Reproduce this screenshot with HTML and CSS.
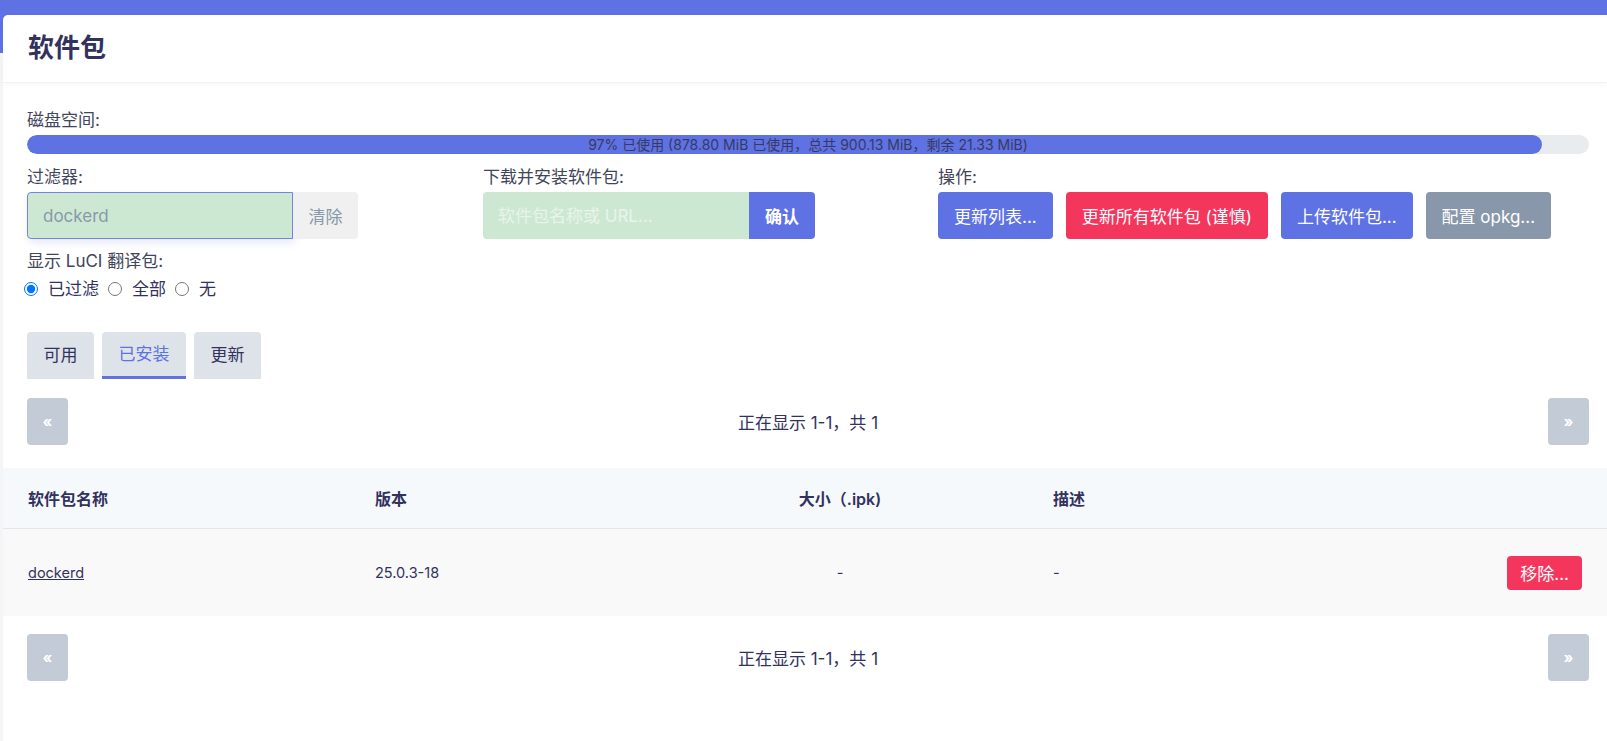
FILE: index.html
```html
<!DOCTYPE html>
<html lang="zh-CN">

<head>
    <meta charset="utf-8">
    <meta name="viewport" content="width=device-width, initial-scale=1.0">
    <title>软件包 - LuCI</title>
    <link rel="stylesheet" href="styles.css">
</head>

<body>
    <div class="main">
        <div class="card">
            <h2 class="card-title">软件包</h2>

            <div class="card-body">
                <div class="field">
                    <label class="field-title">磁盘空间:</label>
                    <div class="disk-bar">
                        <div class="disk-fill" style="width: 97%"></div>
                        <span class="disk-text">97% 已使用 (878.80 MiB 已使用，总共 900.13 MiB，剩余 21.33 MiB)</span>
                    </div>
                </div>

                <div class="controls">
                    <div class="field">
                        <label class="field-title">过滤器:</label>
                        <div class="group">
                            <input class="text filter-input" type="text" value="dockerd">
                            <button class="btn btn-clear">清除</button>
                        </div>
                    </div>
                    <div class="field">
                        <label class="field-title">下载并安装软件包:</label>
                        <div class="group">
                            <input class="text" type="text" placeholder="软件包名称或 URL...">
                            <button class="btn btn-blue btn-ok">确认</button>
                        </div>
                    </div>
                    <div class="field">
                        <label class="field-title">操作:</label>
                        <div class="actions">
                            <button class="btn btn-blue">更新列表...</button>
                            <button class="btn btn-red">更新所有软件包 (谨慎)</button>
                            <button class="btn btn-blue">上传软件包...</button>
                            <button class="btn btn-gray">配置 opkg...</button>
                        </div>
                    </div>
                </div>

                <div class="field i18n">
                    <label class="field-title">显示 LuCI 翻译包:</label>
                    <div class="radios">
                        <label><input type="radio" name="i18n" checked>已过滤</label>
                        <label><input type="radio" name="i18n">全部</label>
                        <label><input type="radio" name="i18n">无</label>
                    </div>
                </div>

                <ul class="tabs">
                    <li>可用</li>
                    <li class="active">已安装</li>
                    <li>更新</li>
                </ul>

                <div class="pager">
                    <button class="btn pager-btn">&laquo;</button>
                    <span>正在显示 1-1，共 1</span>
                    <button class="btn pager-btn">&raquo;</button>
                </div>
            </div>

            <table class="pkg-table">
                <colgroup>
                    <col class="c-name">
                    <col class="c-ver">
                    <col class="c-size">
                    <col>
                    <col class="c-act">
                </colgroup>
                <tr>
                    <th>软件包名称</th>
                    <th>版本</th>
                    <th class="center">大小（.ipk)</th>
                    <th>描述</th>
                    <th></th>
                </tr>
                <tr>
                    <td><a href="#">dockerd</a></td>
                    <td>25.0.3-18</td>
                    <td class="center">-</td>
                    <td>-</td>
                    <td class="right"><button class="btn btn-red btn-remove">移除...</button></td>
                </tr>
            </table>

            <div class="card-body">
                <div class="pager pager-bottom">
                    <button class="btn pager-btn">&laquo;</button>
                    <span>正在显示 1-1，共 1</span>
                    <button class="btn pager-btn">&raquo;</button>
                </div>
            </div>
        </div>
    </div>
</body>

</html>
```

FILE: styles.css
```css
body {
    margin: 0;
    background: linear-gradient(#5e72e4 53px, #f4f5f7 53px);
    font-family: Inter, "Noto Sans CJK SC", sans-serif;
    color: #32325d;
}

.main {
    padding: 15px 0 0 3px;
}

.card {
    background-color: white;
    border-radius: 5px 0 0 0;
    min-height: 726px;
}

.card-title {
    margin: 0;
    padding: 0 25px;
    height: 67px;
    line-height: 66px;
    font-size: 26px;
    font-weight: 700;
    border-bottom: 1px solid #f1f2f4;
    box-shadow: 0 2px 6px rgba(0, 0, 0, 0.03);
}

.card-body {
    padding: 25px 18px 0 24px;
}

.field-title {
    display: block;
    font-size: 17px;
    line-height: 24px;
    margin-bottom: 3px;
    color: #41455a;
}

/* disk usage */

.disk-bar {
    display: grid;
    height: 19px;
    border-radius: 10px;
    background-color: #e9ecef;
    overflow: hidden;
}

.disk-fill,
.disk-text {
    grid-area: 1 / 1;
}

.disk-fill {
    background-color: #5e72e4;
    border-radius: 10px;
}

.disk-text {
    text-align: center;
    font-size: 14px;
    line-height: 19px;
    color: #363a63;
}

/* filter / install / actions */

.controls {
    display: grid;
    grid-template-columns: 456px 455px 1fr;
    margin-top: 11px;
}

.group {
    display: flex;
}

.text {
    box-sizing: border-box;
    width: 266px;
    height: 47px;
    padding: 0 15px;
    border: none;
    border-radius: 4px 0 0 4px;
    background-color: #cde8d2;
    font-family: inherit;
    font-size: 17px;
    color: #8898aa;
    outline: none;
}

.text::placeholder {
    color: #e8f4ea;
}

.filter-input {
    border: 1px solid #7284e8;
    box-shadow: 0 3px 9px rgba(50, 50, 9, 0.04), 3px 4px 8px rgba(94, 114, 228, 0.1);
}

.btn {
    height: 47px;
    padding: 0 16px;
    border: none;
    border-radius: 4px;
    font-family: inherit;
    font-size: 17px;
    color: white;
}

.group .btn {
    border-radius: 0 4px 4px 0;
}

.btn-clear {
    width: 65px;
    padding: 0;
    background-color: #f0f0f0;
    color: #8898aa;
}

.btn-ok {
    width: 66px;
    padding: 0;
    font-weight: 600;
}

.btn-blue {
    background-color: #5e72e4;
}

.btn-red {
    background-color: #f5365c;
}

.btn-gray {
    background-color: #8898aa;
}

.actions {
    display: flex;
    gap: 13px;
}

/* translations */

.i18n {
    margin-top: 10px;
}

.radios {
    display: flex;
    gap: 9px;
    margin: 4px 0 0 -3px;
    font-size: 17px;
    line-height: 24px;
}

.radios label {
    display: flex;
    align-items: center;
}

.radios input {
    width: 14px;
    height: 14px;
    margin: 0 10px 0 0;
}

/* tabs */

.tabs {
    display: flex;
    gap: 8px;
    margin: 31px 0 0;
    padding: 0;
    list-style: none;
}

.tabs li {
    box-sizing: border-box;
    height: 47px;
    line-height: 47px;
    padding: 0 16.5px;
    background-color: #dee3e9;
    border-radius: 4px 4px 0 0;
    font-size: 17px;
}

.tabs .active {
    color: #5e72e4;
    border-bottom: 3px solid #5e72e4;
    line-height: 45px;
}

/* pager */

.pager {
    display: flex;
    justify-content: space-between;
    align-items: center;
    margin-top: 19px;
    font-size: 17px;
}

.pager-btn {
    width: 41px;
    padding: 0;
    background-color: #c3cbd6;
    font-size: 15px;
    font-weight: 700;
}

.pager-bottom {
    margin-top: 0;
}

.card-body:last-child {
    padding-top: 18px;
}

/* package table */

.pkg-table {
    width: 100%;
    margin-top: 23px;
    border-collapse: collapse;
    table-layout: fixed;
}

.c-name {
    width: 347px;
}

.c-ver {
    width: 302px;
}

.c-size {
    width: 376px;
}

.c-act {
    width: 200px;
}

.pkg-table th {
    height: 60px;
    padding: 0 25px;
    text-align: left;
    font-size: 16px;
    font-weight: 600;
    background-color: #f6f9fc;
    border-bottom: 1px solid #e3e6ea;
}

.pkg-table td {
    height: 87px;
    padding: 0 25px;
    font-size: 14.5px;
    background-color: #f9f9f9;
}

.pkg-table .center {
    text-align: center;
}

.pkg-table .right {
    text-align: right;
}

.pkg-table a {
    color: #32325d;
}

.btn-remove {
    height: 34px;
    padding: 0 13px;
}
```
